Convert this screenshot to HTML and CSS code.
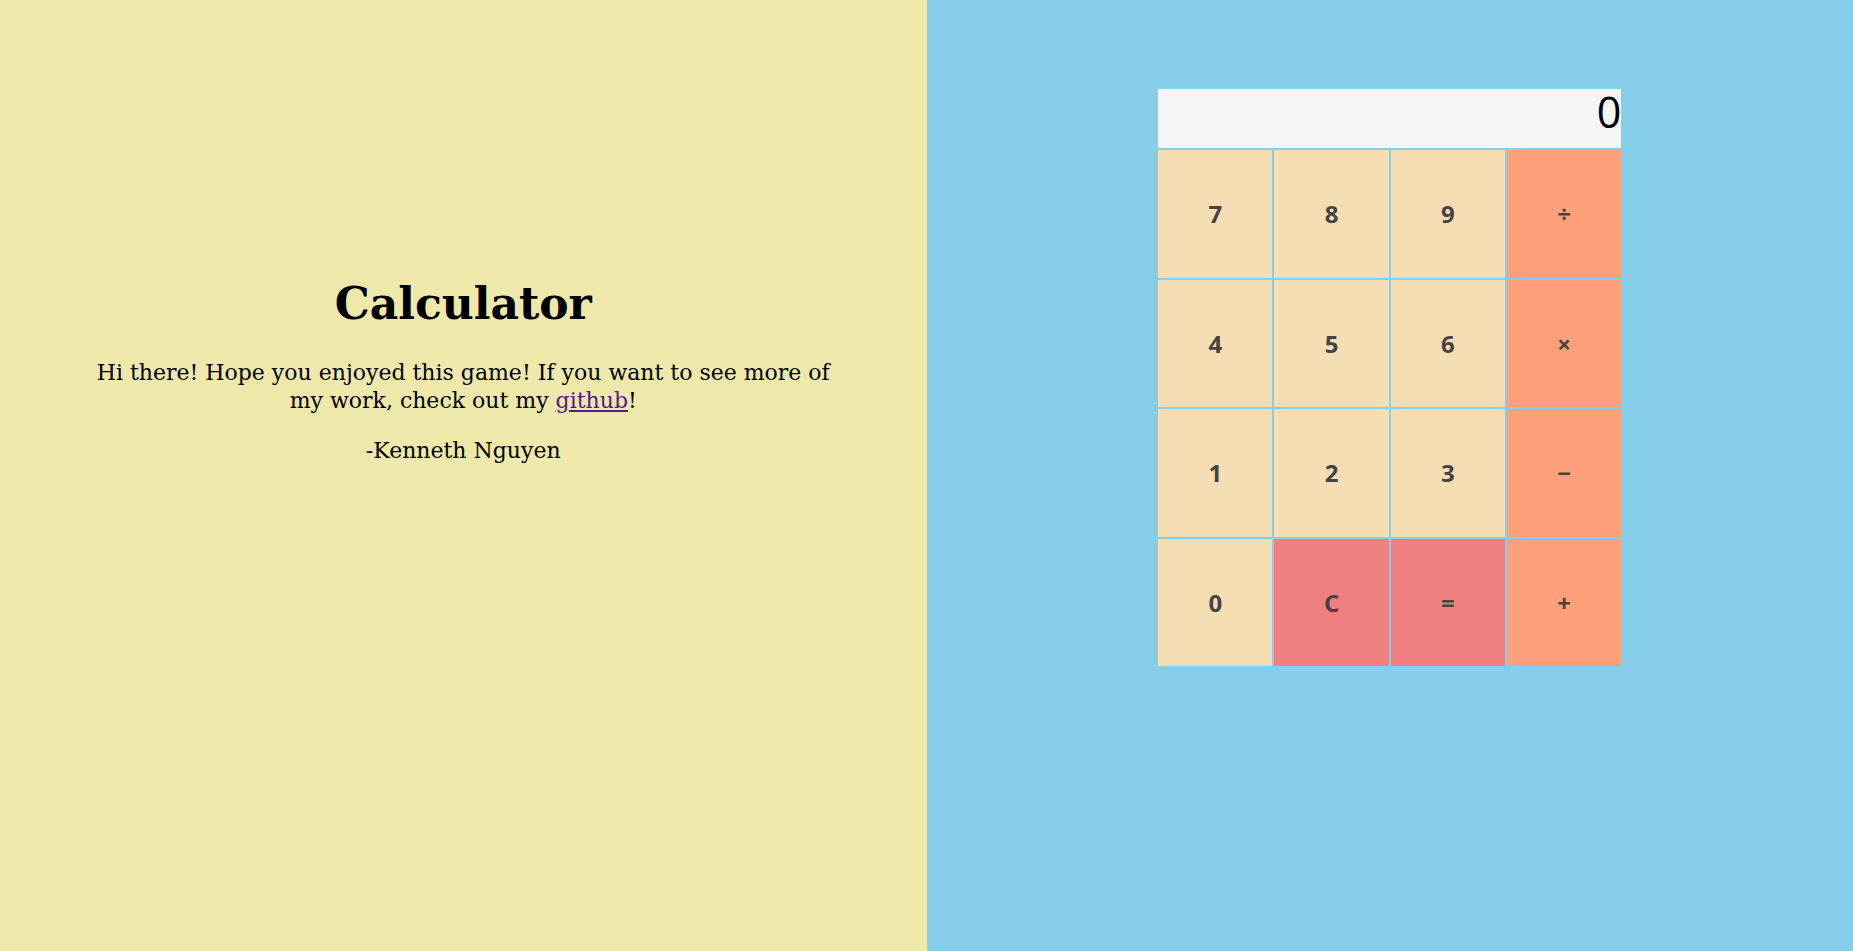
FILE: index.html
```html
<!DOCTYPE html>
<html lang="en">
<head>
<meta charset="utf-8">
<title>Calculator</title>
<link rel="stylesheet" href="styles.css">
</head>
<body>
<div class="page">
  <section class="info">
    <h1 class="info-title">Calculator</h1>
    <p class="info-text">Hi there! Hope you enjoyed this game! If you want to see more of my work, check out my <a class="info-link" href="#">github</a>!</p>
    <p class="info-text">-Kenneth Nguyen</p>
  </section>
  <section class="stage">
    <div class="calc">
      <div class="calc-display">0</div>
      <div class="calc-keys">
        <button class="key key-num">7</button>
        <button class="key key-num">8</button>
        <button class="key key-num">9</button>
        <button class="key key-op">÷</button>
        <button class="key key-num">4</button>
        <button class="key key-num">5</button>
        <button class="key key-num">6</button>
        <button class="key key-op">×</button>
        <button class="key key-num">1</button>
        <button class="key key-num">2</button>
        <button class="key key-num">3</button>
        <button class="key key-op">−</button>
        <button class="key key-num">0</button>
        <button class="key key-act">C</button>
        <button class="key key-act">=</button>
        <button class="key key-op">+</button>
      </div>
    </div>
  </section>
</div>
</body>
</html>
```

FILE: styles.css
```css
html, body {
  margin: 0;
  padding: 0;
  height: 100%;
}

.page {
  display: flex;
  height: 100vh;
}

.info {
  width: 50%;
  box-sizing: border-box;
  background: #EEE8AA;
  padding: 249px 5vw 0;
  text-align: center;
  font-family: "DejaVu Serif", serif;
  font-size: 22px;
  color: #000;
}

.info-title {
  font-size: 2em;
  margin: 0.67em 0;
  font-weight: bold;
}

.info-text {
  margin: 1em 0;
  line-height: 28px;
}

.info-link {
  color: #551A8B;
}

.stage {
  width: 50%;
  box-sizing: border-box;
  background: #87CEEB;
  padding-top: 89px;
}

.calc {
  width: 25vw;
  margin: 0 auto;
  display: flex;
  flex-direction: column;
  gap: 2px;
}

.calc-display {
  height: 59px;
  background: #F5F5F5;
  text-align: right;
  font-family: "Open Sans", sans-serif;
  font-size: 43px;
  line-height: 46px;
  color: #000;
}

.calc-keys {
  display: grid;
  grid-template-columns: repeat(4, 1fr);
  grid-auto-rows: 127.5px;
  gap: 2px;
}

.key {
  border: none;
  margin: 0;
  padding: 0;
  font-family: "Open Sans", sans-serif;
  font-weight: bold;
  font-size: 24px;
  color: #444;
  cursor: pointer;
}

.key-num {
  background: #F5DEB3;
}

.key-op {
  background: #FFA07A;
}

.key-act {
  background: #F08080;
}
```
